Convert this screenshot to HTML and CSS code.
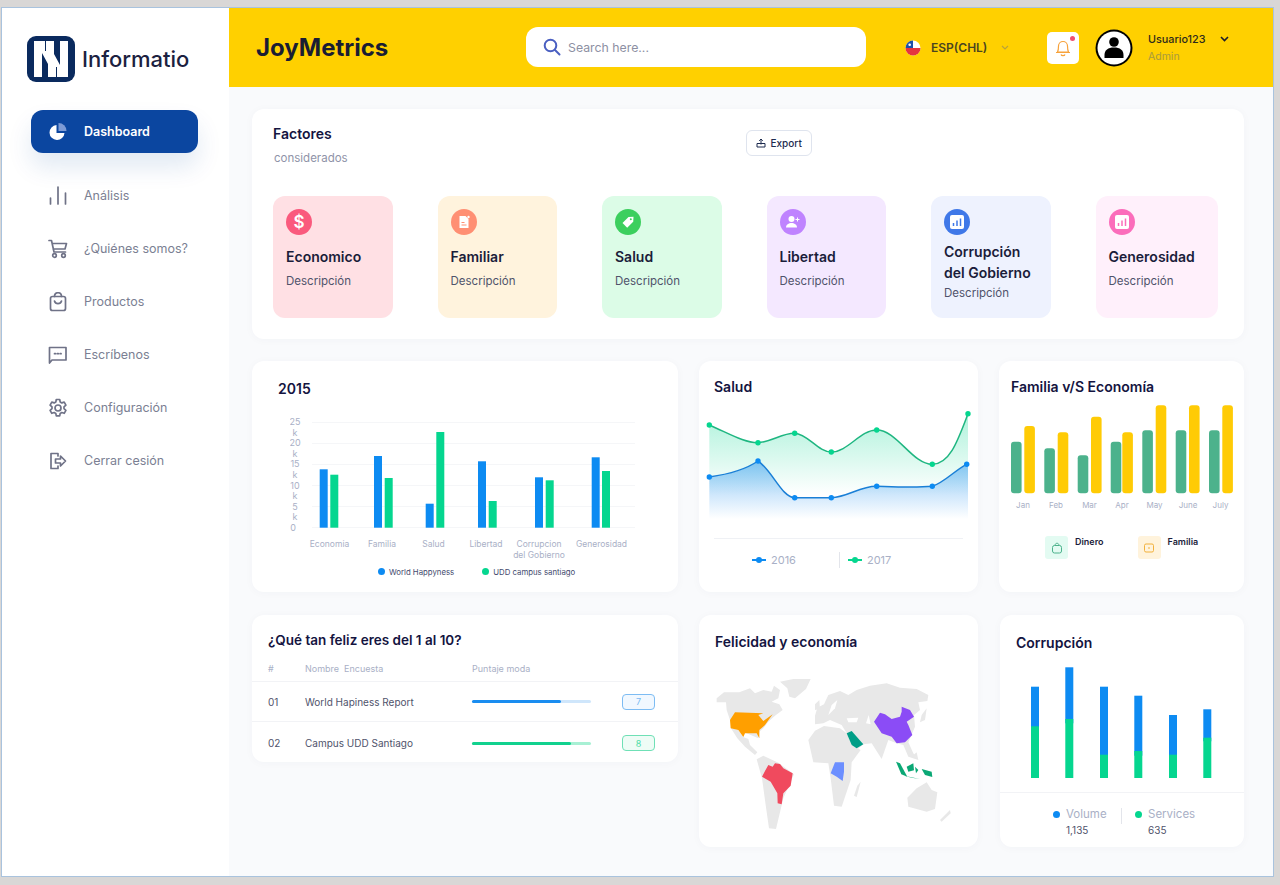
FILE: index.html
```html
<!DOCTYPE html>
<html lang="es">
<head>
    <meta charset="UTF-8">
    <meta name="viewport" content="width=device-width, initial-scale=1.0">
    <title>JoyMetrics</title>
    <link rel="stylesheet" href="styles.css">
</head>
<body>
    <div class="window">
        <aside class="sidebar">
            <div class="brand">
                <svg class="brand-logo" width="48" height="46" viewBox="0 0 48 46">
                    <rect width="48" height="46" rx="9" fill="#0a2a5e"/>
                    <rect x="7" y="5" width="34" height="36" fill="#fff"/>
                    <path d="M15 17L21 28V41H15ZM33 29L27 18V5H33Z" fill="#0a2a5e"/>
                    <path d="M18.500 5V15M29.500 31V41" stroke="#0a2a5e" stroke-width="1"/>
                </svg>
                <span class="brand-name">Informatio</span>
            </div>
            <nav class="nav">
                <a class="nav-item active">
                    <svg width="20" height="20" viewBox="0 0 20 20">
                        <path d="M8.500 3a7.500 7.500 0 1 0 8 8h-8z" fill="#fff"/>
                        <path d="M10.500 1a8 8 0 0 1 8 8h-8z" fill="#7d9bd6"/>
                    </svg>
                    Dashboard
                </a>
                <a class="nav-item">
                    <svg width="20" height="20" viewBox="0 0 20 20" class="nav-icon">
                        <path d="M2.500 12v6M10 1v17M17.500 7v11"/>
                    </svg>
                    Análisis
                </a>
                <a class="nav-item">
                    <svg width="20" height="20" viewBox="0 0 20 20" class="nav-icon">
                        <path d="M1 1.500h2.500l2.500 11.500h11.500M4.200 4.500h14.300l-1.500 5.500h-11.800"/>
                        <circle cx="6.500" cy="16.500" r="1.800"/><circle cx="15.500" cy="16.500" r="1.800"/>
                    </svg>
                    ¿Quiénes somos?
                </a>
                <a class="nav-item">
                    <svg width="20" height="20" viewBox="0 0 20 20" class="nav-icon">
                        <rect x="2.500" y="4.500" width="15" height="14" rx="2"/>
                        <path d="M6.500 4.500c0-5 7-5 7 0M6.500 9c1 3.500 6 3.500 7 0"/>
                    </svg>
                    Productos
                </a>
                <a class="nav-item">
                    <svg width="20" height="20" viewBox="0 0 20 20" class="nav-icon">
                        <path d="M1.500 2.500h16.500v12.500h-14l-2.500 3z"/>
                        <path d="M6.500 8.700h1M9.300 8.700h1M12.100 8.700h1"/>
                    </svg>
                    Escríbenos
                </a>
                <a class="nav-item">
                    <svg width="20" height="20" viewBox="0 0 20 20" class="nav-icon">
                        <circle cx="10" cy="10" r="3"/>
                        <path d="M8.300 1.500h3.400l.5 2.500 1.600.9 2.400-.8 1.700 3-1.900 1.700v1.800l1.900 1.700-1.700 3-2.400-.8-1.600.9-.5 2.500h-3.400l-.5-2.500-1.600-.9-2.400.8-1.700-3 1.900-1.700v-1.800l-1.900-1.700 1.700-3 2.400.8 1.600-.9z"/>
                    </svg>
                    Configuración
                </a>
                <a class="nav-item">
                    <svg width="20" height="20" viewBox="0 0 20 20" class="nav-icon">
                        <path d="M10 5v-2.500h-7v15h7v-2.500M7.500 8h5v-3l5 5-5 5v-3h-5z"/>
                    </svg>
                    Cerrar cesión
                </a>
            </nav>
        </aside>

        <div class="page">
            <header class="topbar">
                <h1 class="app-title">JoyMetrics</h1>
                <div class="search">
                    <svg width="18" height="18" viewBox="0 0 18 18" fill="none" stroke="#4a5fc1" stroke-width="2" stroke-linecap="round">
                        <circle cx="7.500" cy="7.500" r="5.800"/><path d="M12 12l4.500 4.500"/>
                    </svg>
                    <span>Search here...</span>
                </div>
                <div class="lang">
                    <svg class="flag" width="16" height="16" viewBox="0 0 16 16">
                        <circle cx="8" cy="8" r="7.500" fill="#fff"/>
                        <path d="M.5 8h15a7.500 7.500 0 0 1-15 0z" fill="#e5343f"/>
                        <path d="M8 .5a7.500 7.500 0 0 0-7.500 7.500h7.500z" fill="#1c4fa8"/>
                        <circle cx="4.700" cy="4.700" r="1.300" fill="#fff"/>
                    </svg>
                    <span class="lang-name">ESP(CHL)</span>
                    <svg width="8" height="6" viewBox="0 0 8 6" fill="none" stroke="#b9a23a" stroke-width="1.200"><path d="M1 1l3 3 3-3"/></svg>
                </div>
                <div class="bell">
                    <svg width="16" height="18" viewBox="0 0 16 18" fill="none" stroke="#f7a23b" stroke-width="1.200">
                        <path d="M2.500 13c1-2 1-3.500 1-6a4.500 4.500 0 0 1 9 0c0 2.500 0 4 1 6zM1 13.500h14M6 15.500c.5 1.500 3.500 1.500 4 0"/>
                    </svg>
                    <span class="bell-dot"></span>
                </div>
                <div class="avatar">
                    <svg width="38" height="38" viewBox="0 0 38 38">
                        <circle cx="19" cy="19" r="18.500" fill="#000"/>
                        <circle cx="19" cy="19" r="16.500" fill="#fff"/>
                        <circle cx="19" cy="13" r="4.800" fill="#000"/>
                        <path d="M9.500 29v-3c0-5 3.500-7.500 9.500-7.500s9.500 2.500 9.500 7.500v3z" fill="#000"/>
                    </svg>
                </div>
                <div class="user">
                    <div class="user-row">
                        <span class="user-name">Usuario123</span>
                        <svg width="9" height="6" viewBox="0 0 9 6" fill="none" stroke="#1d1d2b" stroke-width="1.600"><path d="M1 1l3.500 3.500 3.500-3.500"/></svg>
                    </div>
                    <span class="user-role">Admin</span>
                </div>
            </header>

            <main class="content">
                <section class="card factors">
                    <div class="factors-head">
                        <div>
                            <h2 class="card-title">Factores</h2>
                            <p class="subtitle">considerados</p>
                        </div>
                        <button class="export">
                            <svg width="10" height="10" viewBox="0 0 10 10" fill="none" stroke="#1d2b4f" stroke-width="1"><path d="M1 5.500h8v3.500h-8zM5 6.500v-5.500M3.200 2.800l1.800-1.800 1.800 1.800"/></svg>
                            Export
                        </button>
                    </div>
                    <div class="tiles">
                        <div class="tile tile-red">
                            <span class="tile-icon dollar">$</span>
                            <h3>Economico</h3>
                            <p>Descripción</p>
                        </div>
                        <div class="tile tile-orange">
                            <span class="tile-icon">
                                <svg width="14" height="14" viewBox="0 0 14 14"><path d="M2.500 1h6l3 3v9h-9z" fill="#fff"/><path d="M4.500 7.500h3M4.500 10h5" stroke="#ff8f73" stroke-width="1.200"/><circle cx="11.500" cy="2" r="1.200" fill="#fff"/></svg>
                            </span>
                            <h3>Familiar</h3>
                            <p>Descripción</p>
                        </div>
                        <div class="tile tile-green">
                            <span class="tile-icon">
                                <svg width="14" height="14" viewBox="0 0 14 14"><path d="M1.500 8l6-6 5-.3-.3 5-6 6z" fill="#fff"/><circle cx="9.800" cy="4.200" r="1" fill="#3ccf5e"/></svg>
                            </span>
                            <h3>Salud</h3>
                            <p>Descripción</p>
                        </div>
                        <div class="tile tile-purple">
                            <span class="tile-icon">
                                <svg width="16" height="14" viewBox="0 0 16 14" fill="#fff"><circle cx="6.500" cy="4" r="3"/><path d="M1 12.500c0-6 11-6 11 0z"/><path d="M12.500 2.500v4M10.500 4.500h4" stroke="#fff" stroke-width="1"/></svg>
                            </span>
                            <h3>Libertad</h3>
                            <p>Descripción</p>
                        </div>
                        <div class="tile tile-blue tile-long">
                            <span class="tile-icon">
                                <svg width="14" height="14" viewBox="0 0 14 14"><rect width="14" height="14" rx="2" fill="#fff"/><path d="M3.500 11v-3M7 11v-5.500M10.500 11v-7.500" stroke="#3f78e8" stroke-width="1.500"/></svg>
                            </span>
                            <h3>Corrupción<br>del Gobierno</h3>
                            <p>Descripción</p>
                        </div>
                        <div class="tile tile-pink">
                            <span class="tile-icon">
                                <svg width="14" height="14" viewBox="0 0 14 14"><rect width="14" height="14" rx="2" fill="#fff"/><path d="M3.500 11v-3M7 11v-5.500M10.500 11v-7.500" stroke="#fb6dbb" stroke-width="1.500"/></svg>
                            </span>
                            <h3>Generosidad</h3>
                            <p>Descripción</p>
                        </div>
                    </div>
                </section>

                <div class="row">
                    <section class="card col-wide chart-2015">
                        <h2 class="card-title">2015</h2>
                        <svg class="chart" width="360" height="150" viewBox="290 412 360 150">
                            <g class="grid">
                                <path d="M312 422.500h323M312 443.500h323M312 464.500h323M312 485.500h323M312 506.500h323M312 527.500h323"/>
                            </g>
                            <g class="tick" text-anchor="middle">
                                <text x="295" y="425">25</text><text x="295" y="436">k</text>
                                <text x="295" y="446">20</text><text x="295" y="457">k</text>
                                <text x="295" y="467">15</text><text x="295" y="478">k</text>
                                <text x="295" y="489">10</text><text x="295" y="499">k</text>
                                <text x="295" y="510">5</text><text x="295" y="520">k</text>
                                <text x="293" y="531">0</text>
                            </g>
                            <g fill="#0d8bf2">
                                <rect x="319.700" y="469.300" width="8" height="58.400"/>
                                <rect x="374" y="456" width="8" height="71.700"/>
                                <rect x="425.700" y="503.700" width="8" height="24"/>
                                <rect x="478" y="461.300" width="8" height="66.400"/>
                                <rect x="535" y="477.300" width="8" height="50.400"/>
                                <rect x="591.700" y="457.300" width="8" height="70.400"/>
                            </g>
                            <g fill="#05d68f">
                                <rect x="330.300" y="474.700" width="8" height="53"/>
                                <rect x="384.700" y="478" width="8" height="49.700"/>
                                <rect x="436.300" y="432" width="8" height="95.700"/>
                                <rect x="488.700" y="501" width="8" height="26.700"/>
                                <rect x="545.700" y="480.300" width="8" height="47.400"/>
                                <rect x="602" y="471" width="8" height="56.700"/>
                            </g>
                            <g class="tick tick-label" text-anchor="middle">
                                <text x="329.500" y="547">Economia</text>
                                <text x="382" y="547">Familia</text>
                                <text x="433.500" y="547">Salud</text>
                                <text x="486" y="547">Libertad</text>
                                <text x="539" y="547">Corrupcion</text>
                                <text x="539" y="557.500">del Gobierno</text>
                                <text x="601.500" y="547">Generosidad</text>
                            </g>
                        </svg>
                        <div class="legend-2015">
                            <span><i class="dot dot-blue"></i>World Happyness</span>
                            <span><i class="dot dot-green"></i>UDD campus santiago</span>
                        </div>
                    </section>

                    <section class="card col-mid chart-salud">
                        <h2 class="card-title">Salud</h2>
                        <svg class="chart" width="269" height="120" viewBox="705 405 269 120">
                            <defs>
                                <linearGradient id="greenFill" x1="0" y1="0" x2="0" y2="1">
                                    <stop offset="0" stop-color="#05d68f" stop-opacity=".32"/>
                                    <stop offset="1" stop-color="#05d68f" stop-opacity="0"/>
                                </linearGradient>
                                <linearGradient id="blueFill" x1="0" y1="0" x2="0" y2="1">
                                    <stop offset="0" stop-color="#1a8df0" stop-opacity=".5"/>
                                    <stop offset="1" stop-color="#1a8df0" stop-opacity="0"/>
                                </linearGradient>
                            </defs>
                            <path fill="url(#greenFill)" d="M709.300 425C730 434 745 443 758 442.700C772 442 782 433 794.700 433.300C808 434 818 452 831.300 452C848 452 860 430 876.700 430C897 430 912 464.300 932.300 464.300C950 464 958 440 968 413.700V495H709.300Z"/>
                            <path fill="url(#blueFill)" d="M709.300 477C730 474 745 470 758 461C772 470 782 497.700 794.700 497.700L831.300 497.700C848 497 860 486 876.700 486.300C897 487 915 488 932.300 486.300C945 482 955 470 968 464.300V519H709.300Z"/>
                            <path class="line" stroke="#1fb681" d="M709.300 425C730 434 745 443 758 442.700C772 442 782 433 794.700 433.300C808 434 818 452 831.300 452C848 452 860 430 876.700 430C897 430 912 464.300 932.300 464.300C950 464 958 440 968 413.700"/>
                            <path class="line" stroke="#1a7fd6" d="M709.300 477C730 474 745 470 758 461C772 470 782 497.700 794.700 497.700L831.300 497.700C848 497 860 486 876.700 486.300C897 487 915 488 932.300 486.300C945 482 955 470 966.700 464.300"/>
                            <g fill="#05d68f">
                                <circle cx="709.300" cy="425" r="2.700"/><circle cx="758" cy="442.700" r="2.700"/><circle cx="794.700" cy="433.300" r="2.700"/><circle cx="831.300" cy="452" r="2.700"/><circle cx="876.700" cy="430" r="2.700"/><circle cx="932.300" cy="464.300" r="2.700"/><circle cx="968" cy="413.700" r="2.700"/>
                            </g>
                            <g fill="#0d8bf2">
                                <circle cx="709.300" cy="477" r="2.700"/><circle cx="758" cy="461" r="2.700"/><circle cx="794.700" cy="497.700" r="2.700"/><circle cx="831.300" cy="497.700" r="2.700"/><circle cx="876.700" cy="486.300" r="2.700"/><circle cx="932.300" cy="486.300" r="2.700"/><circle cx="966.700" cy="464.300" r="2.700"/>
                            </g>
                        </svg>
                        <div class="legend-salud">
                            <span class="series"><i class="mark mark-blue"></i>2016</span>
                            <span class="series series-next"><i class="mark mark-green"></i>2017</span>
                        </div>
                    </section>

                    <section class="card col-narrow chart-familia">
                        <h2 class="card-title">Familia v/S Economía</h2>
                        <svg class="chart" width="232" height="115" viewBox="1005 400 232 115">
                            <g fill="#4cb28c">
                                <rect x="1011" y="441.700" width="10.600" height="51.600" rx="3"/>
                                <rect x="1044.300" y="448.300" width="10.600" height="45" rx="3"/>
                                <rect x="1077.700" y="455.300" width="10.600" height="38" rx="3"/>
                                <rect x="1110.700" y="441.700" width="10.600" height="51.600" rx="3"/>
                                <rect x="1142.300" y="430.300" width="10.600" height="63" rx="3"/>
                                <rect x="1175.700" y="430.300" width="10.600" height="63" rx="3"/>
                                <rect x="1209" y="430.300" width="10.600" height="63" rx="3"/>
                            </g>
                            <g fill="#ffcb05">
                                <rect x="1024.300" y="426" width="10.600" height="67.300" rx="3"/>
                                <rect x="1057.700" y="432.300" width="10.600" height="61" rx="3"/>
                                <rect x="1091" y="416.700" width="10.600" height="76.600" rx="3"/>
                                <rect x="1122.300" y="432.300" width="10.600" height="61" rx="3"/>
                                <rect x="1155.700" y="405.300" width="10.600" height="88" rx="3"/>
                                <rect x="1189" y="405.300" width="10.600" height="88" rx="3"/>
                                <rect x="1222.300" y="405.300" width="10.600" height="88" rx="3"/>
                            </g>
                            <g class="tick tick-small" text-anchor="middle">
                                <text x="1023" y="508">Jan</text><text x="1056" y="508">Feb</text><text x="1089.500" y="508">Mar</text><text x="1122" y="508">Apr</text><text x="1154.500" y="508">May</text><text x="1188" y="508">June</text><text x="1220.500" y="508">July</text>
                            </g>
                        </svg>
                        <div class="legend-familia">
                            <div class="legend-item">
                                <span class="legend-box box-mint">
                                    <svg width="12" height="12" viewBox="0 0 12 12" fill="none" stroke="#4cb28c" stroke-width="1"><rect x="1.500" y="3.500" width="9" height="7.500" rx="2"/><path d="M4 3.500c0-3 4-3 4 0"/></svg>
                                </span>
                                <b>Dinero</b>
                            </div>
                            <div class="legend-item">
                                <span class="legend-box box-cream">
                                    <svg width="12" height="12" viewBox="0 0 12 12" fill="none" stroke="#f2b13c" stroke-width="1"><rect x="1.500" y="2" width="9" height="8" rx="1.500"/><path d="M5 6h2"/></svg>
                                </span>
                                <b>Familia</b>
                            </div>
                        </div>
                    </section>
                </div>

                <div class="row row-last">
                    <section class="card col-wide survey">
                        <h2 class="card-title">¿Qué tan feliz eres del 1 al 10?</h2>
                        <div class="survey-row survey-head">
                            <span>#</span><span>Nombre &nbsp;Encuesta</span><span>Puntaje moda</span>
                        </div>
                        <div class="survey-row">
                            <span>01</span>
                            <span>World Hapiness Report</span>
                            <div class="progress progress-blue"><div class="progress-fill" style="width: 75%"></div></div>
                            <span class="score score-blue">7</span>
                        </div>
                        <div class="survey-row">
                            <span>02</span>
                            <span>Campus UDD Santiago</span>
                            <div class="progress progress-green"><div class="progress-fill" style="width: 83%"></div></div>
                            <span class="score score-green">8</span>
                        </div>
                    </section>

                    <section class="card col-mid map-card">
                        <h2 class="card-title">Felicidad y economía</h2>
                        <svg class="world" width="270" height="180" viewBox="0 0 810 540">
                            <g fill="#e8e8e8">
                                <path d="M50 100L72 82L118 82L150 70L165 85L190 75L215 80L222 62L240 75L235 100L215 110L238 118L248 135L225 152L205 170L190 190L178 200L175 220L105 190L90 165L80 135L78 112L50 112Z"/>
                                <path d="M240 50L280 42L332 42L318 72L285 100L268 95L262 70Z"/>
                                <path d="M92 188L115 195L130 216L145 222L150 240L172 262L165 270L135 245L112 220Z"/>
                                <path d="M170 283L190 272L235 293L282 328L250 400L228 492L207 490L197 420L186 340Z"/>
                                <path d="M345 152L352 128L372 118L385 90L420 78L445 90L470 75L510 62L560 55L600 68L650 72L685 90L682 108L655 112L660 135L642 150L645 185L625 232L640 265L655 285L625 275L610 240L590 235L565 225L545 282L515 235L490 238L470 255L440 205L425 180L390 165L370 175L345 178Z"/>
                                <path d="M325 225L345 197L372 183L420 190L440 205L455 240L482 255L455 292L452 345L425 425L402 422L392 340L385 295L340 292Z"/>
                                <path d="M622 398L650 370L680 352L695 375L712 382L705 432L680 440L625 425Z"/>
                                <path d="M472 362L482 350L470 396L462 392Z"/>
                                <path d="M720 465L750 435L752 445L725 470Z"/>
                                <path d="M665 150L680 130L675 165L660 172Z"/>
                                <path d="M345 118L358 105L360 132L345 135Z"/>
                                <path d="M640 270L650 262L655 285Z"/>
                            </g>
                            <g fill="#ffffff">
                                <path d="M395 120L412 105L405 130L385 150Z"/>
                                <path d="M440 160L475 158L470 172L445 172Z"/>
                                <path d="M498 175L506 150L512 178Z"/>
                            </g>
                            <path fill="#ff9f00" d="M90 165L105 142L190 145L175 150L190 168L218 148L195 180L178 195L178 220L170 205L135 205L130 216L115 195L92 190Z"/>
                            <path fill="#f04a5e" d="M205 300L218 305L225 295L240 297L250 310L278 325L272 362L250 385L245 418L233 415L232 385L212 350L186 335L195 318Z"/>
                            <path fill="#8b4cf6" d="M522 170L540 143L555 148L575 162L600 155L605 140L605 125L630 135L642 155L620 170L625 180L637 210L615 232L590 235L575 215L545 205Z"/>
                            <path fill="#009e87" d="M440 205L455 198L490 238L470 250L455 240Z"/>
                            <path fill="#6c8fff" d="M405 292L432 292L432 320L428 348L410 335L392 325Z"/>
                            <g fill="#0ba875">
                                <path d="M588 290L600 295L622 335L604 328Z"/>
                                <path d="M620 305L640 295L642 316L625 320Z"/>
                                <path d="M665 312L695 320L697 336L675 330Z"/>
                                <path d="M612 332L660 342L635 338Z"/>
                                <path d="M645 305L655 315L648 325Z"/>
                            </g>
                        </svg>
                    </section>

                    <section class="card col-narrow corrupcion">
                        <h2 class="card-title">Corrupción</h2>
                        <svg class="chart" width="200" height="120" viewBox="1022 663 200 120">
                            <g fill="#0d8bf2">
                                <rect x="1031" y="687.700" width="8" height="45"/>
                                <rect x="1065.300" y="668.300" width="8" height="56"/>
                                <rect x="1100" y="687.700" width="8" height="72"/>
                                <rect x="1134.300" y="696.700" width="8" height="60"/>
                                <rect x="1169" y="716" width="8" height="44"/>
                                <rect x="1203.300" y="710.300" width="8" height="32"/>
                            </g>
                            <g fill="#05d68f">
                                <rect x="1031" y="727.300" width="8" height="51.700"/>
                                <rect x="1065.300" y="720" width="8" height="59"/>
                                <rect x="1100" y="755.700" width="8" height="23.300"/>
                                <rect x="1134.300" y="752" width="8" height="27"/>
                                <rect x="1169" y="755.700" width="8" height="23.300"/>
                                <rect x="1203.300" y="738.700" width="8" height="40.300"/>
                            </g>
                        </svg>
                        <div class="stats">
                            <div class="stat">
                                <span class="stat-label"><i class="dot dot-blue"></i>Volume</span>
                                <span class="stat-value">1,135</span>
                            </div>
                            <div class="stat stat-next">
                                <span class="stat-label"><i class="dot dot-green"></i>Services</span>
                                <span class="stat-value">635</span>
                            </div>
                        </div>
                    </section>
                </div>
            </main>
        </div>
    </div>
</body>
</html>
```

FILE: styles.css
```css
* {
    box-sizing: border-box;
    margin: 0;
    padding: 0;
}

body {
    font-family: 'Inter', 'Open Sans', sans-serif;
    background-color: #d9d7d6;
    height: 885px;
    overflow: hidden;
    padding: 7px 6px 7px 1px;
}

.window {
    display: flex;
    height: 870px;
    background-color: #f9fafc;
    border: 1px solid #a9c3de;
}

/* Sidebar */
.sidebar {
    width: 227px;
    flex-shrink: 0;
    background-color: #ffffff;
}

.brand {
    display: flex;
    align-items: center;
    gap: 7px;
    padding: 28px 0 0 25px;
}

.brand-name {
    font-size: 22px;
    font-weight: 500;
    color: #1b2140;
}

.nav {
    display: flex;
    flex-direction: column;
    padding: 28px 0 0 29px;
}

.nav-item {
    display: flex;
    align-items: center;
    gap: 16px;
    height: 53px;
    padding-left: 17px;
    font-size: 12.500px;
    color: #7b7f93;
}

.nav-item.active {
    width: 167px;
    height: 43px;
    margin-bottom: 16px;
    color: #ffffff;
    font-weight: 600;
    background-color: #0b46a0;
    border-radius: 12px;
    box-shadow: 0 14px 24px rgba(11, 70, 160, 0.12);
}

.nav-icon {
    fill: none;
    stroke: #6f7287;
    stroke-width: 1.7;
    stroke-linejoin: round;
    stroke-linecap: round;
}

/* Top bar */
.page {
    flex: 1;
    min-width: 0;
    display: flex;
    flex-direction: column;
}

.topbar {
    height: 79px;
    flex-shrink: 0;
    display: flex;
    align-items: center;
    padding-left: 27px;
    background-color: #ffd000;
}

.app-title {
    width: 270px;
    font-size: 24px;
    font-weight: 700;
    color: #1a1d33;
}

.search {
    width: 340px;
    height: 40px;
    margin-top: -1px;
    display: flex;
    align-items: center;
    gap: 7px;
    padding-left: 17px;
    background-color: #ffffff;
    border-radius: 12px;
    font-size: 12.300px;
    color: #8d90a3;
}

.lang {
    display: flex;
    align-items: center;
    margin-left: 39px;
    width: 142px;
}

.lang-name {
    margin: 0 14px 0 10px;
    font-size: 12px;
    font-weight: 600;
    color: #4a4520;
}

.bell {
    position: relative;
    width: 32px;
    height: 32px;
    display: flex;
    align-items: center;
    justify-content: center;
    background-color: #ffffff;
    border-radius: 5px;
}

.bell-dot {
    position: absolute;
    top: 4px;
    right: 4px;
    width: 5px;
    height: 5px;
    border-radius: 50%;
    background-color: #f0506e;
}

.avatar {
    margin-left: 16px;
    height: 38px;
}

.user {
    margin-left: 15px;
    display: flex;
    flex-direction: column;
    gap: 4px;
}

.user-row {
    display: flex;
    align-items: center;
    gap: 16px;
}

.user-name {
    width: 56px;
    font-size: 10.800px;
    font-weight: 500;
    color: #2c2a1c;
}

.user-role {
    font-size: 10.500px;
    color: #a89a3f;
}

/* Cards */
.content {
    flex: 1;
    padding: 22px 29px 0 23px;
    display: flex;
    flex-direction: column;
    gap: 22px;
}

.card {
    background-color: #ffffff;
    border-radius: 12px;
    box-shadow: 0 1px 10px rgba(30, 50, 100, 0.03);
}

.card-title {
    font-size: 14px;
    font-weight: 600;
    line-height: 20px;
    color: #14143f;
}

.chart {
    display: block;
}

.tick {
    font-size: 9px;
    fill: #a9b0c6;
}

.tick-label {
    font-size: 8.500px;
}

.tick-small {
    font-size: 8px;
}

.grid {
    fill: none;
    stroke: #f5f6f8;
    stroke-width: 1;
}

.line {
    fill: none;
    stroke-width: 1.500;
}

.dot {
    display: inline-block;
    width: 7px;
    height: 7px;
    border-radius: 50%;
}

.dot-blue {
    background-color: #0d8bf2;
}

.dot-green {
    background-color: #05d68f;
}

/* Factores */
.factors {
    height: 230px;
    padding: 15px 26px 0 21px;
}

.factors-head {
    display: flex;
    align-items: flex-start;
    gap: 398px;
    height: 72px;
}

.subtitle {
    margin: 7px 0 0 1px;
    font-size: 11.500px;
    color: #8f93a8;
}

.export {
    width: 66px;
    height: 26px;
    margin-top: 6px;
    display: flex;
    align-items: center;
    justify-content: center;
    gap: 5px;
    font-family: inherit;
    font-size: 10px;
    font-weight: 500;
    color: #1d2b4f;
    background-color: #ffffff;
    border: 1px solid #dfe4ee;
    border-radius: 6px;
}

.tiles {
    display: flex;
    gap: 45px;
}

.tile {
    width: 119.500px;
    height: 122px;
    padding: 13px 0 0 13px;
    border-radius: 12px;
}

.tile:last-child {
    flex: 1;
}

.tile h3 {
    margin-top: 11px;
    font-size: 14px;
    font-weight: 600;
    line-height: 21px;
    color: #1b1d3a;
}

.tile p {
    margin-top: 6px;
    font-size: 11.500px;
    line-height: 16px;
    color: #50536b;
}

.tile-long h3 {
    margin-top: 6px;
}

.tile-long p {
    margin-top: 2px;
}

.tile-icon {
    width: 26px;
    height: 26px;
    display: flex;
    align-items: center;
    justify-content: center;
    border-radius: 50%;
    color: #ffffff;
}

.dollar {
    font-size: 17px;
    font-weight: 600;
}

.tile-red { background-color: #ffe0e4; }
.tile-red .tile-icon { background-color: #fa5a7d; }
.tile-orange { background-color: #fff3dd; }
.tile-orange .tile-icon { background-color: #ff8f73; }
.tile-green { background-color: #dcfce7; }
.tile-green .tile-icon { background-color: #3ccf5e; }
.tile-purple { background-color: #f4e8ff; }
.tile-purple .tile-icon { background-color: #bf83ff; }
.tile-blue { background-color: #eef2fe; }
.tile-blue .tile-icon { background-color: #3f78e8; }
.tile-pink { background-color: #fff0fb; }
.tile-pink .tile-icon { background-color: #fb6dbb; }

/* Rows */
.row {
    display: flex;
    gap: 21px;
    height: 231px;
}

.row-last {
    height: 232px;
    margin-top: 1px;
}

.col-wide {
    width: 426px;
}

.col-mid {
    width: 279px;
}

.col-narrow {
    width: 245px;
}

.chart-2015 {
    padding: 18px 0 0 26px;
}

.chart-2015 .chart {
    margin: 13px 0 0 12px;
}

.legend-2015 {
    display: flex;
    gap: 28px;
    margin: 5px 0 0 100px;
    font-size: 7.800px;
    color: #444b6e;
}

.legend-2015 .dot {
    margin-right: 4px;
}

.chart-salud {
    padding: 16px 0 0 15px;
}

.chart-salud .chart {
    margin: 8px 0 0 -9px;
}

.legend-salud {
    display: flex;
    margin: 13px 15px 0 0;
    padding: 13px 0 0 38px;
    border-top: 1px solid #eff1f5;
    font-size: 11px;
    color: #a9b0c6;
}

.series {
    display: flex;
    align-items: center;
    gap: 5px;
}

.series-next {
    margin-left: 43px;
    padding-left: 8px;
    border-left: 1px solid #e3e5eb;
    height: 16px;
}

.mark {
    position: relative;
    width: 14px;
    height: 2px;
}

.mark::after {
    content: "";
    position: absolute;
    left: 4px;
    top: -2px;
    width: 6px;
    height: 6px;
    border-radius: 50%;
    background-color: inherit;
}

.mark-blue {
    background-color: #0d8bf2;
}

.mark-green {
    background-color: #05d68f;
}

.chart-familia {
    padding: 16px 0 0 12px;
}

.chart-familia .chart {
    margin: 3px 0 0 -6px;
}

.legend-familia {
    display: flex;
    gap: 34px;
    margin: 21px 0 0 34px;
}

.legend-item {
    display: flex;
    align-items: flex-start;
    gap: 7px;
}

.legend-item b {
    font-size: 9px;
    font-weight: 600;
    line-height: 11px;
    color: #1b1d3a;
}

.legend-box {
    width: 23px;
    height: 23px;
    display: flex;
    align-items: center;
    justify-content: center;
    border-radius: 3px;
}

.box-mint {
    background-color: #e3fbf2;
}

.box-cream {
    background-color: #fff3dc;
}

/* Survey table */
.survey {
    height: 147px;
    padding-top: 15px;
}

.survey .card-title {
    padding-left: 16px;
    margin-bottom: 11px;
    font-size: 13.500px;
}

.survey-row {
    display: grid;
    grid-template-columns: 37px 167px 119px 64px;
    column-gap: 0;
    align-items: center;
    height: 40px;
    padding-left: 16px;
    border-top: 1px solid #f2f3f6;
    font-size: 10px;
    color: #50536b;
}

.survey-row:last-child {
    height: 41px;
    padding-top: 2px;
}

.survey-head {
    height: 15px;
    margin-bottom: 5px;
    border-top: none;
    font-size: 9px;
    color: #a9b0c6;
}

.progress {
    height: 3px;
    border-radius: 2px;
}

.progress-fill {
    height: 100%;
    border-radius: 2px;
}

.progress-blue {
    background-color: #cfe6fb;
}

.progress-blue .progress-fill {
    background-color: #1a8df0;
}

.progress-green {
    background-color: #a8f0d4;
}

.progress-green .progress-fill {
    background-color: #12d18e;
}

.score {
    width: 33px;
    height: 16px;
    margin-left: 31px;
    display: flex;
    align-items: center;
    justify-content: center;
    font-size: 9px;
    border-radius: 4px;
}

.score-blue {
    color: #78b9f2;
    background-color: #f1f8ff;
    border: 1px solid #7dbcf3;
}

.score-green {
    color: #4fdca8;
    background-color: #eefcf6;
    border: 1px solid #6fe0b6;
}

/* Map */
.map-card {
    padding: 17px 0 0 16px;
}

.world {
    display: block;
    margin: 13px 0 0 -15px;
}

/* Corrupcion */
.corrupcion {
    padding: 18px 0 0 16px;
    margin-left: 1px;
    width: 244px;
}

.corrupcion .chart {
    margin: 9px 0 0 6px;
}

.stats {
    display: flex;
    margin: 10px 0 0 -16px;
    padding: 15px 0 0 53px;
    border-top: 1px solid #f2f3f6;
}

.stat {
    width: 68px;
}

.stat-next {
    width: auto;
    margin-left: 0;
    padding-left: 13px;
    border-left: 1px solid #e3e5eb;
    height: 16px;
}

.stat-label {
    display: flex;
    align-items: center;
    gap: 6px;
    font-size: 11.500px;
    line-height: 13px;
    color: #a9b0c6;
}

.stat-value {
    display: block;
    margin: 3px 0 0 13px;
    font-size: 10px;
    color: #50536b;
}
```
